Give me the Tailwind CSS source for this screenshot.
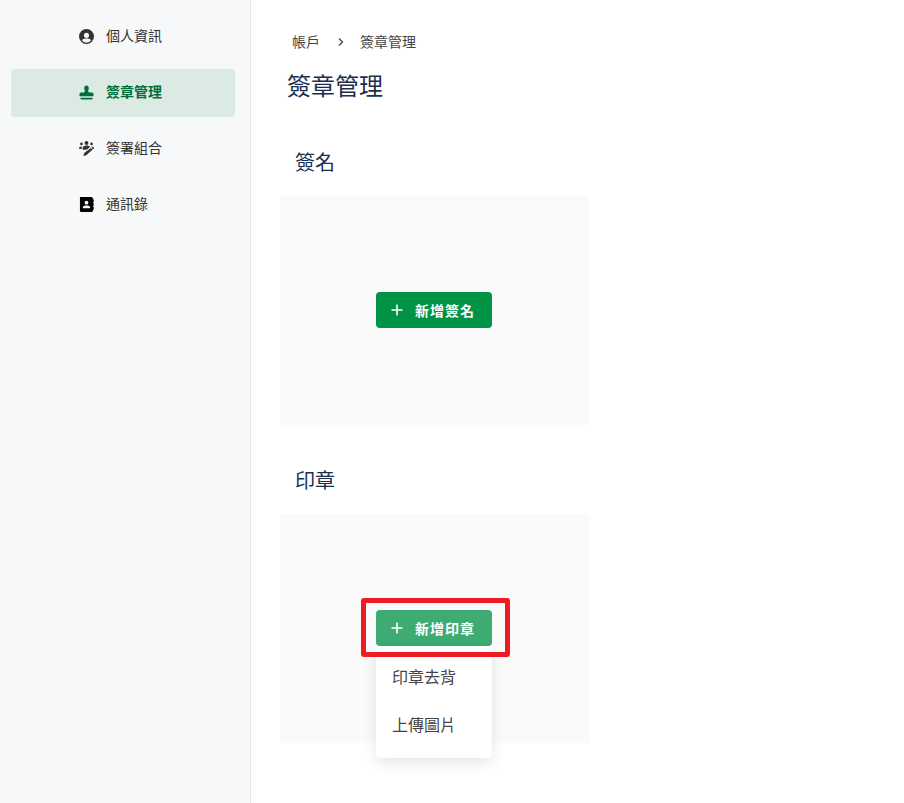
<!DOCTYPE html>
<html lang="zh-Hant">
<head>
  <meta charset="UTF-8" />
  <meta name="viewport" content="width=device-width, initial-scale=1.0" />
  <script src="https://cdn.jsdelivr.net/npm/@tailwindcss/browser@4"></script>
  <title>簽章管理</title>
</head>

<body class="bg-white h-[803px] overflow-hidden flex font-['Inter','Noto_Sans_CJK_TC',sans-serif] text-[14px] text-[#333]">

  <!-- Sidebar -->
  <aside class="w-[251px] shrink-0 h-full bg-[#f6f8fa] border-r border-[#e5e8eb] pt-[13px] pl-[11px] pr-[15px] flex flex-col gap-2">
    <a class="h-12 flex items-center pl-[68px] gap-3 rounded">
      <svg class="w-[15px] h-[15px] mb-[1px] text-[#333]" viewBox="0 0 512 512" fill="currentColor"><path d="M256 0a256 256 0 1 0 0 512 256 256 0 1 0 0-512zM256 128a88 88 0 1 1 0 176 88 88 0 1 1 0-176zM256 464c-62 0-117-28-154-72 20-38 60-64 106-64h96c46 0 86 26 106 64-37 44-92 72-154 72z"/></svg>
      <span class="mb-[3px]">個人資訊</span>
    </a>
    <a class="h-12 flex items-center pl-[68px] gap-3 rounded bg-[#dbeae3] text-[#00703c] font-bold">
      <svg class="w-[15px] h-[15px] mb-[1px]" viewBox="0 0 512 512" fill="currentColor"><path d="M312 201c0-25 24-47 24-89C336 62 300 16 256 16s-80 46-80 96c0 42 24 64 24 89 0 29-24 39-48 55H72c-31 0-56 25-56 56v48c0 13 11 24 24 24h432c13 0 24-11 24-24v-48c0-31-25-56-56-56h-80c-24-16-48-26-48-55zM48 432h416v32c0 18-14 32-32 32H80c-18 0-32-14-32-32z"/></svg>
      <span class="mb-[3px]">簽章管理</span>
    </a>
    <a class="h-12 flex items-center pl-[68px] gap-3 rounded">
      <svg class="w-[15px] h-[15px] mb-[1px]" viewBox="0 0 512 512" fill="currentColor"><circle cx="256" cy="70" r="66"/><circle cx="84" cy="100" r="46"/><circle cx="428" cy="100" r="46"/><path d="M120 262c0-62 60-106 136-106 60 0 100 18 124 50l-120 96H150c-18-8-30-22-30-40zM0 256c0-40 32-68 72-68 12 0 22 2 30 6-12 20-18 44-14 76H24c-14 0-24-4-24-14zM412 190c8-3 16-4 24-4 44 0 76 30 76 70 0 10-8 14-20 14h-40c6-16 2-34-10-46zM406 236l62 50-220 200-100 24 30-100z"/></svg>
      <span class="mb-[3px]">簽署組合</span>
    </a>
    <a class="h-12 flex items-center pl-[68px] gap-3 rounded">
      <svg class="w-[15px] h-[15px] mb-[1px]" viewBox="0 0 512 512" fill="#000"><path fill-rule="evenodd" d="M64 0h352c35 0 64 29 64 64v384c0 35-29 64-64 64H64c-18 0-32-14-32-32V32C32 14 46 0 64 0zM256 128a64 64 0 1 0 0 128 64 64 0 1 0 0-128zM208 288c-44 0-80 36-80 80 0 9 7 16 16 16h224c9 0 16-7 16-16 0-44-36-80-80-80z"/><rect x="480" y="80" width="24" height="96" rx="10"/><rect x="480" y="208" width="24" height="96" rx="10"/><rect x="480" y="336" width="24" height="96" rx="10"/></svg>
      <span class="mb-[3px]">通訊錄</span>
    </a>
  </aside>

  <!-- Main -->
  <main class="flex-1 pl-[29px]">
    <nav class="mt-[32px] ml-[12px] h-5 flex items-center text-[14px] leading-5 text-[#444]">
      <span>帳戶</span>
      <svg class="w-[10px] h-[10px] ml-[16px] mr-[14px]" viewBox="0 0 10 10" fill="none" stroke="#444" stroke-width="1.3"><path d="M3 1.5 6.5 5 3 8.5"/></svg>
      <span>簽章管理</span>
    </nav>

    <h1 class="mt-[17px] ml-[7px] text-[24px] leading-9 font-normal text-[#1c2f4f]">簽章管理</h1>

    <section class="mt-[42px]">
      <h2 class="ml-[15px] text-[20px] leading-8 font-normal text-[#1c2f4f]">簽名</h2>
      <div class="mt-[17px] w-[309px] h-[229px] bg-[#fafafa] flex items-center justify-center pr-[1px] pb-[2px]">
        <button class="w-[116px] h-9 pl-[15px] rounded bg-[#009345] text-white font-bold flex items-center gap-[12px]">
          <svg class="w-3 h-3" viewBox="0 0 12 12" stroke="currentColor" stroke-width="1.6"><path d="M6 .5v11M.5 6h11"/></svg>
          <span class="tracking-[1px] mt-[2px]">新增簽名</span>
        </button>
      </div>
    </section>

    <section class="mt-[40px]">
      <h2 class="ml-[15px] text-[20px] leading-8 font-normal text-[#1c2f4f]">印章</h2>
      <div class="mt-[17px] w-[309px] h-[229px] bg-[#fafafa] flex items-center justify-center pr-[1px] pb-[2px]">
        <div class="relative">
          <button class="w-[116px] h-9 pl-[15px] rounded bg-[#3dab72] text-white font-bold flex items-center gap-[12px]">
            <svg class="w-3 h-3" viewBox="0 0 12 12" stroke="currentColor" stroke-width="1.6"><path d="M6 .5v11M.5 6h11"/></svg>
            <span class="tracking-[1px] mt-[2px]">新增印章</span>
          </button>
          <!-- dropdown -->
          <div class="absolute left-0 top-[36px] w-[116px] h-[112px] bg-white rounded shadow-[0_5px_14px_rgba(0,0,0,0.1)] flex flex-col text-[16px] text-[#444]">
            <div class="h-12 mt-[7px] pl-4 flex items-center">印章去背</div>
            <div class="h-12 pl-4 flex items-center">上傳圖片</div>
          </div>
          <!-- highlight box -->
          <div class="absolute left-[-15px] top-[-12px] w-[149px] h-[59px] border-[5px] border-[#ed1c24] rounded-[3px]"></div>
        </div>
      </div>
    </section>
  </main>

</body>
</html>
